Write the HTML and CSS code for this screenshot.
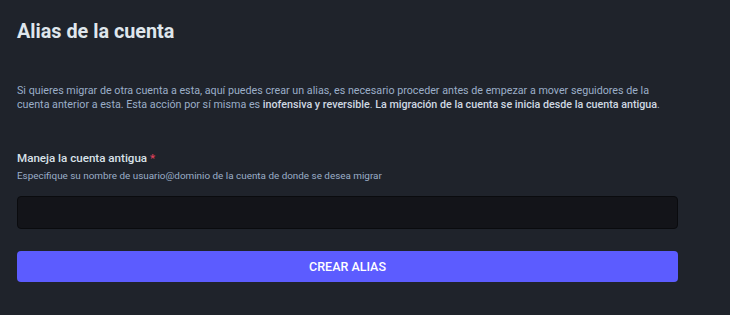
FILE: index.html
```html
<!DOCTYPE html>
<html lang="es">
<head>
<meta charset="utf-8">
<link rel="stylesheet" href="styles.css">
</head>
<body>
<div class="content">
  <h2 class="title">Alias de la cuenta</h2>
  <p class="intro">Si quieres migrar de otra cuenta a esta, aquí puedes crear un alias, es necesario proceder antes de empezar a mover seguidores de la cuenta anterior a esta. Esta acción por sí misma es <strong>inofensiva y reversible</strong>. <strong>La migración de la cuenta se inicia desde la cuenta antigua</strong>.</p>
  <div class="field">
    <label class="label">Maneja la cuenta antigua <abbr class="req">*</abbr></label>
    <span class="hint">Especifique su nombre de usuario@dominio de la cuenta de donde se desea migrar</span>
    <input class="input" type="text">
  </div>
  <button class="btn">Crear alias</button>
</div>
</body>
</html>
```
FILE: styles.css
```css
html, body {
  margin: 0;
  padding: 0;
  background: #1f232b;
  height: 100%;
}
body {
  font-family: Roboto, "Liberation Sans", sans-serif;
  color: #d9e1e8;
}
.content {
  width: 661px;
  padding: 20px 0 0 17px;
  display: flex;
  flex-direction: column;
}
.title {
  margin: 0;
  font-size: 19.8px;
  font-weight: 700;
  line-height: 24px;
  color: #dfe6ec;
}
.intro {
  margin: 40px 0 0;
  font-size: 10.72px;
  line-height: 14px;
  color: #9baec8;
}
.intro strong {
  color: #cfd9e3;
  font-weight: 500;
}
.field {
  display: flex;
  flex-direction: column;
  margin-top: 39px;
}
.label {
  font-size: 11.6px;
  font-weight: 500;
  line-height: 14px;
  color: #d9e1e8;
}
.req {
  color: #df405a;
  text-decoration: none;
}
.hint {
  margin-top: 5px;
  font-size: 9.9px;
  line-height: 12px;
  color: #9baec8;
}
.input {
  margin-top: 14px;
  height: 33px;
  box-sizing: border-box;
  background: #131419;
  border: 1px solid #0a0b0e;
  border-radius: 4px;
  color: #fff;
  font-size: 14px;
  padding: 0 10px;
  outline: none;
}
.btn {
  margin-top: 22px;
  height: 31px;
  background: #5c5cff;
  border: 0;
  border-radius: 4px;
  color: #fff;
  font-family: Roboto, "Liberation Sans", sans-serif;
  font-size: 12.5px;
  font-weight: 500;
  text-transform: uppercase;
  cursor: pointer;
}
```
